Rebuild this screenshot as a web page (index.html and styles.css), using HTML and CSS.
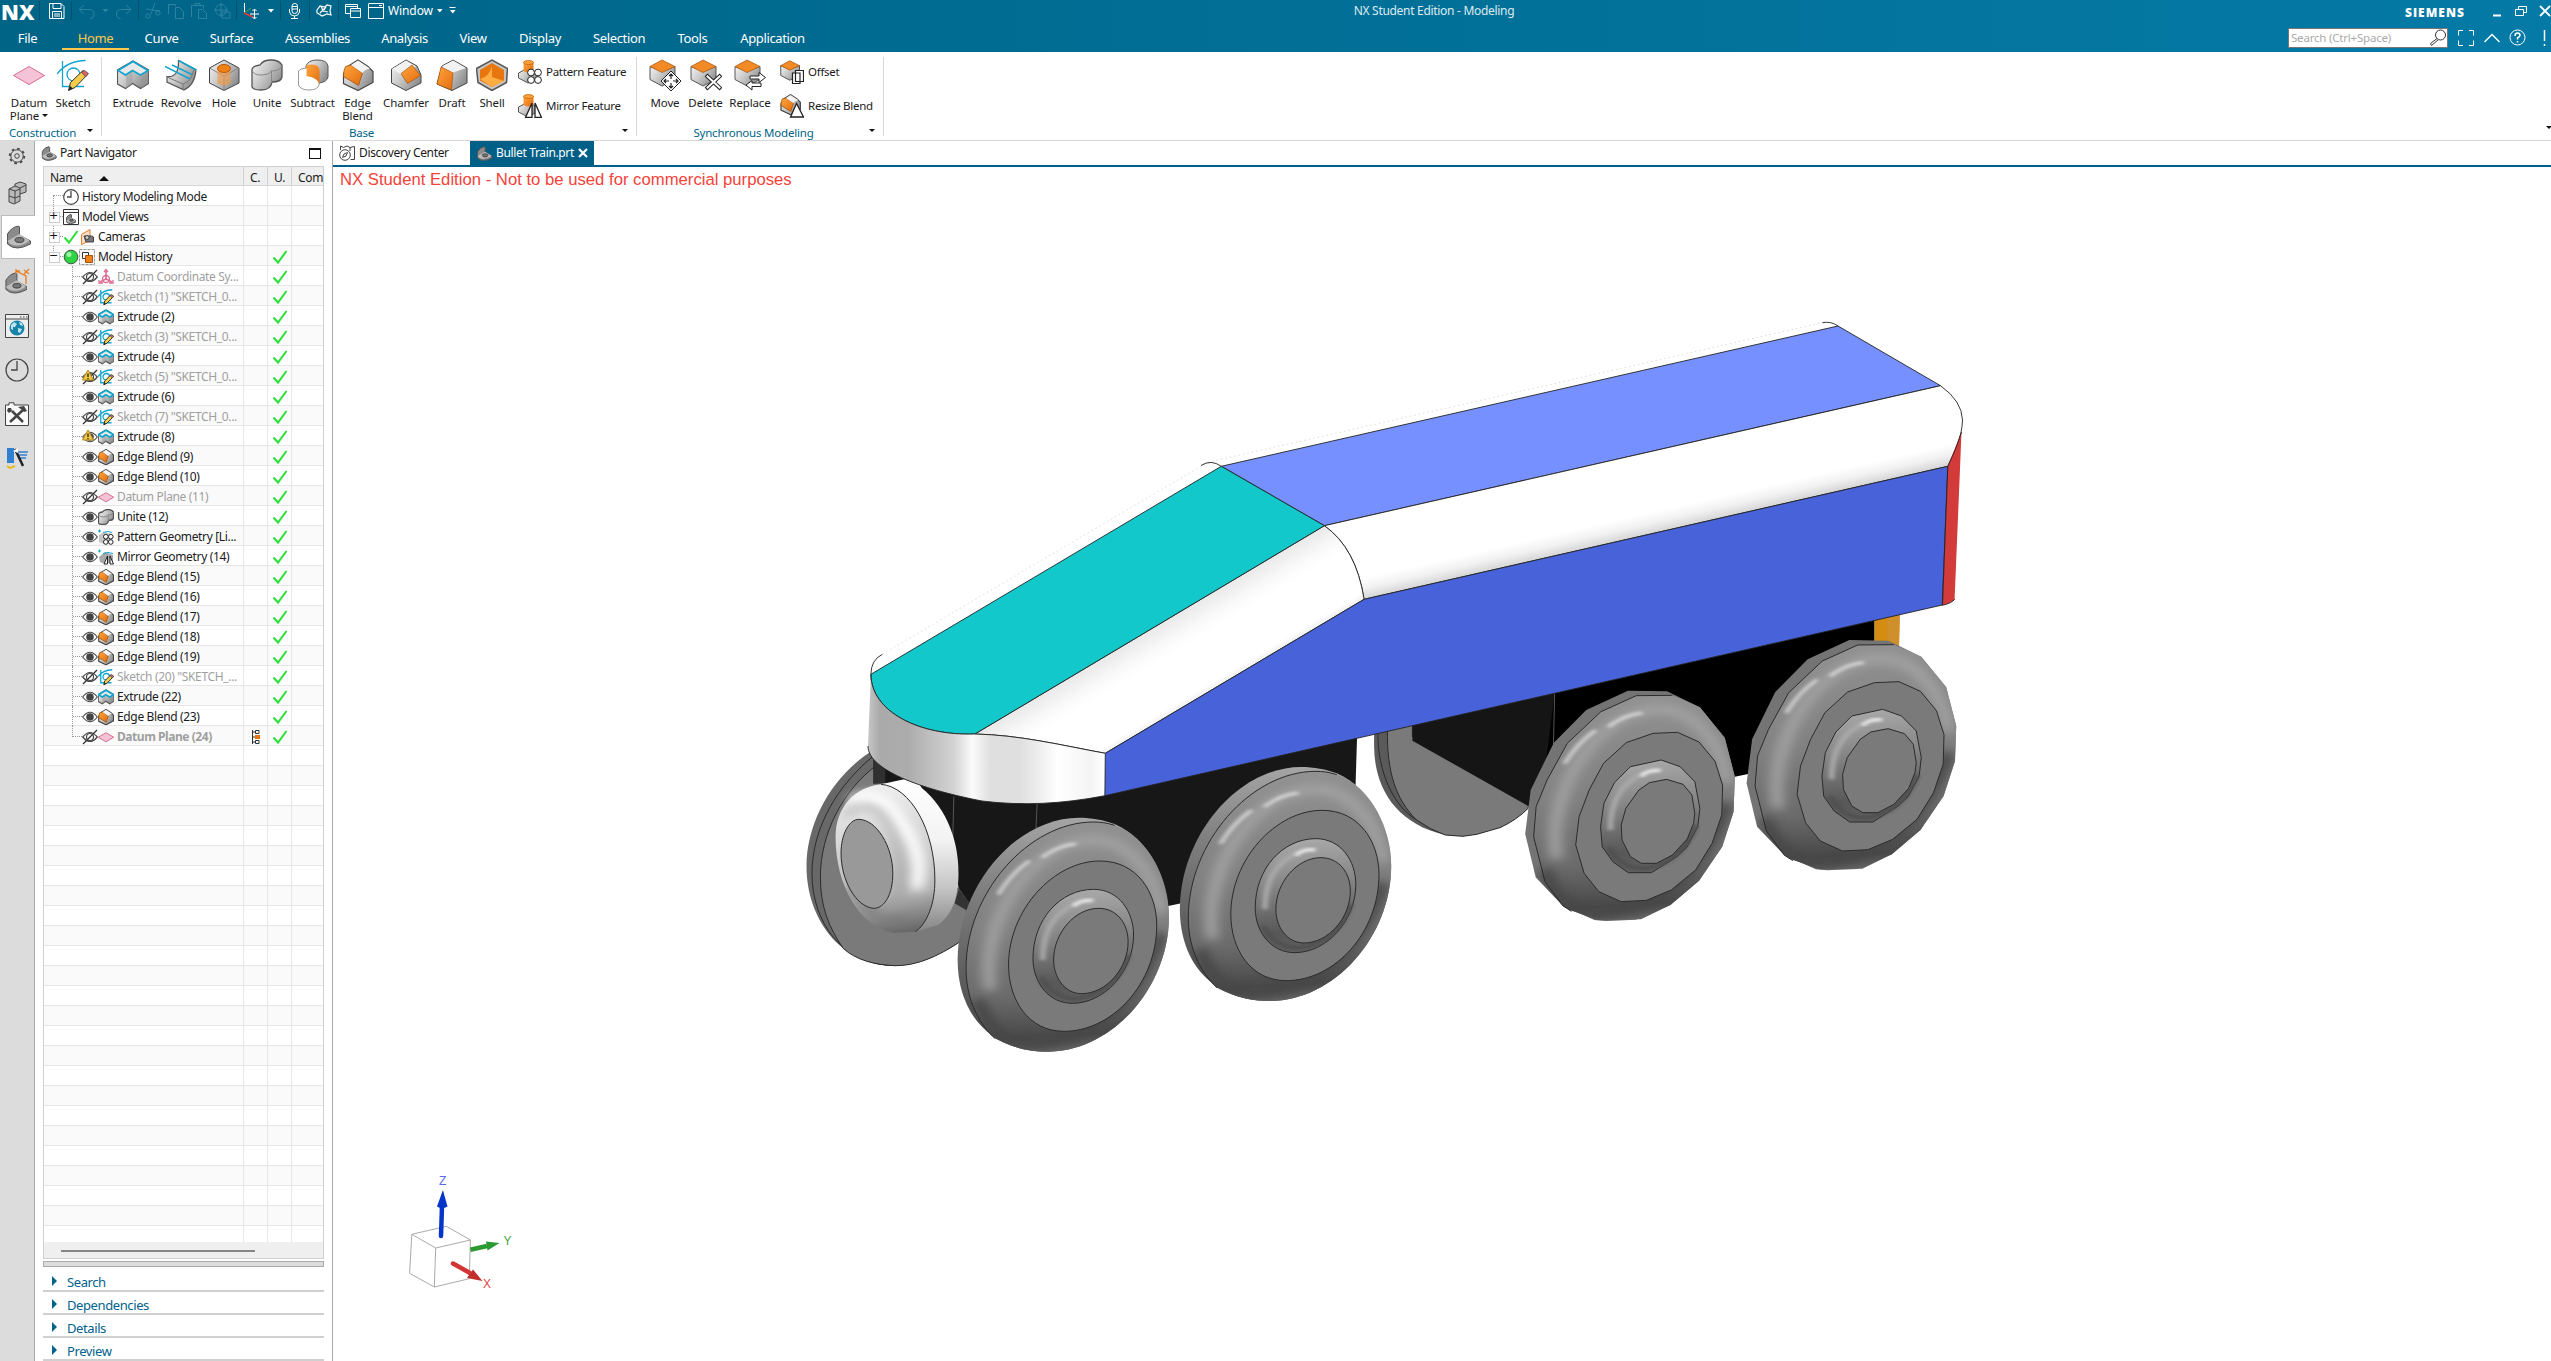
FILE: index.html
```html
<!DOCTYPE html>
<html lang="en">
<head>
<meta charset="utf-8">
<title>NX Student Edition - Modeling</title>
<link rel="stylesheet" href="styles.css">
</head>
<body>
<svg class="defs" width="0" height="0">
  <defs>
    <linearGradient id="steel" x1="0" x2="1" y1="0" y2=".6"><stop offset="0" stop-color="#f4f4f4"/><stop offset=".5" stop-color="#c9c9c9"/><stop offset="1" stop-color="#8f8f8f"/></linearGradient>
    <linearGradient id="amber" x1="0" x2="1" y1="0" y2="1"><stop offset="0" stop-color="#ffa640"/><stop offset="1" stop-color="#e36b0c"/></linearGradient>
    <symbol id="plane" viewBox="0 0 32 32"><path d="M.5 16.500 16 7.500 31.500 16.500 16 25.500Z" fill="#f5c3d6" stroke="#db6c94"/></symbol>
    <symbol id="sketch" viewBox="0 0 32 32"><path d="M5.500 2v25.500H27M0 15Q10 2 28.500 1.500" fill="none" stroke="#10a5cf" stroke-width="1.300"/><circle cx="16.500" cy="15.500" r="6.500" fill="none" stroke="#10a5cf" stroke-width="1.300"/><path d="M11.500 31.500l2-8L26 11.500l5 3.500L18 28.500Z" fill="#f3cc4c" stroke="#333"/><path d="M24.500 13l3-1.500 4 3-3 3.500Z" fill="#e2606a" stroke="#444" stroke-width=".7"/><path d="M11.500 31.500l1.500-4.500 3 2.500Z" fill="#222"/></symbol>
    <symbol id="extrude" viewBox="0 0 32 32"><path d="M.5 11v14l8 4.500 7-5 8 5 8-5V11L16 2Z" fill="url(#steel)" stroke="#555" stroke-width="1.200"/><path d="M.5 11 9 15.500v14l6.500-5V12l8.500 4v13.500l7.500-5V11Z" fill="#999" fill-opacity=".5"/><path d="M1 11.500 16 2.500l15 9-7.500 4.500-8-4.500L8.500 16Z" fill="#e9e9e9" stroke="#10a5cf" stroke-width="1.600"/></symbol>
    <symbol id="revolve" viewBox="0 0 32 32"><path d="M2 17.500Q14 19 13.500 1.500l17.500 9Q30 26 19 31L2 23Z" fill="url(#steel)" stroke="#555" stroke-width="1.200"/><path d="M2 18l16 7v6M18 25Q27 22 28.500 11" fill="none" stroke="#777"/><path d="M0 7.500 25 20M7 6l20 9.500M13.500 1.500 31 11" stroke="#10a5cf" stroke-width="1.500"/></symbol>
    <symbol id="hole" viewBox="0 0 32 32"><path d="M1.500 9 16 1l15 8v15L16 31.500 1.500 24Z" fill="url(#steel)" stroke="#444"/><path d="M1.500 9 16 17l15-8M16 17v14.500" stroke="#888" fill="none"/><path d="M9.500 10v14.500q6.500 4 13 0V10Z" fill="#f29a45" fill-opacity=".65"/><ellipse cx="16" cy="9.500" rx="6.500" ry="4" fill="#f28115" stroke="#b65a08"/></symbol>
    <symbol id="unite" viewBox="0 0 32 32"><path d="M1 11q0-4 8-5 3-5 11-5t11 5v12q-1 5-10 5-1 8-11 8T1 26Z" fill="url(#steel)" stroke="#555" stroke-width="1.300"/><path d="M1 11.500q2 5 10 4.500 9-1 9-4 9 0 11-5.500M20.500 12v12" fill="none" stroke="#888"/></symbol>
    <symbol id="subtract" viewBox="0 0 32 32"><path d="M9 7q2-6 11.500-6T31 7v11q-1 5-9 6l-13-8Z" fill="url(#steel)" stroke="#555"/><path d="M1.500 12v14q2 5 10.500 5t10-5V12Q17 7.500 9.500 9 3 9.500 1.500 12Z" fill="#fff" stroke="#999"/><path d="M9.500 6q12-2 13 5v15q-1-7-13-9Z" fill="url(#amber)"/></symbol>
    <symbol id="blend" viewBox="0 0 32 32"><path d="M1.500 20 1.500 15 5 8 16 1l10 6.500 5 5v11L16 31.500 1.500 24.500Z" fill="url(#steel)" stroke="#444" stroke-width="1.200"/><path d="M3.500 7.500 9 6l11.500 8-4 12.500L1.500 17.500Q1.500 11 3.500 7.500Z" fill="url(#amber)" stroke="#9c4c05" stroke-width=".7"/><path d="M9 6l7-4.500 12 8q-6 1-7.500 4.500Z" fill="#f3f3f3"/></symbol>
    <symbol id="chamfer" viewBox="0 0 32 32"><path d="M1.500 10 16 1l11 6 4 9v8L16 31.500 1.500 24Z" fill="url(#steel)" stroke="#444"/><path d="M2 10 16 1.500l10 6L12 16Z" fill="#f1f1f1"/><path d="M22 6l8.500 10.500-13 8L11 14.500Z" fill="url(#amber)" stroke="#9c4c05" stroke-width=".6"/></symbol>
    <symbol id="draft" viewBox="0 0 32 32"><path d="M6 7 17 1l14 8v15L16 31.500 1 25Z" fill="url(#steel)" stroke="#444"/><path d="M5 8l12 5.500L15.500 31 1 25Z" fill="url(#amber)" stroke="#9c4c05" stroke-width=".6"/><path d="M6 7.500 17 1.500 30 9l-13 4.500Z" fill="#f2f2f2"/></symbol>
    <symbol id="shell" viewBox="0 0 32 32"><path d="M.5 9.500 16 1l15.500 8.500-1 14L16 31.500 2 23.500Z" fill="#c5c5c5" stroke="#555" stroke-width="1.500"/><path d="M4 11 16 4l12 7v10.500L16 28 4 21.500Z" fill="#e8760e"/><path d="M4 20q9-2 12-13v11l12 4-12 6Z" fill="#ffad42"/></symbol>
    <symbol id="cube" viewBox="0 0 32 32"><path d="M1 7.500v13L13 27l13-6.500V7.500L13 12Z" fill="url(#steel)" stroke="#555"/><path d="M1 7.500 13 1l13 6.500L13 13.500Z" fill="#f28a25" stroke="#a45208" stroke-width=".7"/></symbol>
    <symbol id="pattern" viewBox="0 0 24 24"><path d="M.5 13 10 8l9 5v5l-9 5-9.500-5Z" fill="url(#steel)" stroke="#555"/><path d="M5.500 2v9q5 3 10 0V2Z" fill="url(#amber)"/><ellipse cx="10.500" cy="2.500" rx="5" ry="2" fill="#ffa23b" stroke="#b65a08" stroke-width=".7"/><g fill="#fff" stroke="#222"><circle cx="13" cy="12.500" r="3.400"/><circle cx="20" cy="12.500" r="3.400"/><circle cx="13" cy="20" r="3.400"/><circle cx="20" cy="20" r="3.400"/></g></symbol>
    <symbol id="mirror" viewBox="0 0 24 24"><path d="M.5 13 10 8l9 5v5l-9 5-9.500-5Z" fill="url(#steel)" stroke="#555"/><path d="M5.500 2v9q5 3 10 0V2Z" fill="url(#amber)"/><ellipse cx="10.500" cy="2.500" rx="5" ry="2" fill="#ffa23b" stroke="#b65a08" stroke-width=".7"/><path d="M14 9v14.500H7.500ZM17 9v14.500h6.500Z" fill="#fff" stroke="#222" stroke-width="1.300"/></symbol>
    <symbol id="pgeo" viewBox="0 0 16 16"><path d="M1 6l5-3 8 2v7l-8 3-5-2Z" fill="#c4c4c4"/><path d="M0 2h3M1.500.5v3M5 3.500q5-2 9 0" stroke="#10a5cf" fill="none"/><g fill="#fff" stroke="#222" stroke-width="1"><circle cx="7.800" cy="7.700" r="2.300"/><circle cx="12.800" cy="7.700" r="2.300"/><circle cx="7.800" cy="13" r="2.300"/><circle cx="12.800" cy="13" r="2.300"/></g></symbol>
    <symbol id="mgeo" viewBox="0 0 16 16"><path d="M1 8l6-5 8 3v7l-8 2-5-2Z" fill="#a9a9a9"/><path d="M0 2h3M1.500.5v3M5 4.500q5-2 10 0" stroke="#10a5cf" fill="none"/><path d="M9.500 7v8H6ZM12 7v8h3.500Z" fill="#fff" stroke="#222" stroke-width="1"/></symbol>
    <symbol id="csys" viewBox="0 0 16 16"><g fill="none" stroke="#db6c94" stroke-width="1.300"><path d="M8 1v9L2 13M8 10l6 3" stroke-width="1.600"/><circle cx="8" cy="10" r="3.500"/><path d="M6 3l2-2.500L10 3M1 11v3h4M15 11v3h-4"/></g></symbol>
    <symbol id="eye" viewBox="0 0 16 16"><path d="M.7 8Q8-1.500 15.300 8 8 17.500.7 8Z" fill="#fff" stroke="#4a4a4a" stroke-width="1.200"/><circle cx="8" cy="8" r="3.800" fill="#444"/></symbol>
    <symbol id="eyeoff" viewBox="0 0 16 16"><path d="M.7 8Q8-1 15.300 8 8 17 .7 8Z" fill="none" stroke="#4a4a4a" stroke-width="1.200"/><circle cx="8" cy="8" r="3.500" fill="none" stroke="#4a4a4a" stroke-width="1.200"/><path d="M1 15 15 1" stroke="#333" stroke-width="1.300"/></symbol>
    <symbol id="warn" viewBox="0 0 16 16"><path d="M6 1 11.500 11H.5Z" fill="#f3c944" stroke="#b38a1b"/><path d="M6 4.500v3.500M6 9v1.200" stroke="#222" stroke-width="1.300"/></symbol>
    <symbol id="check" viewBox="0 0 16 16"><path d="M1.500 8.500 6 13.500 14.500 2" fill="none" stroke="#2fe03c" stroke-width="2.100"/></symbol>
    <symbol id="clock" viewBox="0 0 24 24"><circle cx="12" cy="12" r="11" fill="none" stroke="#444" stroke-width="1.200"/><path d="M12 3v9H6" fill="none" stroke="#444" stroke-width="1.300"/></symbol>
    <symbol id="part" viewBox="0 0 24 24"><path d="M1 16V9Q5 2 12 1l1 1v8l11 6v3q-8 4-13 4-6 0-10-4Z" fill="#8b8b8b" stroke="#555"/><path d="M1 16l12-7 10 6.500q-6 5-12 5-7 0-10-4.500Z" fill="#bdbdbd"/><ellipse cx="13" cy="15" rx="4.500" ry="2.500" fill="#777" stroke="#444"/></symbol>
  </defs>
</svg>

<header class="top">
  <div class="titlebar">
    <div class="quick">
      <b class="nx">NX</b>
      <svg width="440" height="24" viewBox="38 0 440 24" fill="none" stroke="#fff">
        <path d="M39.500 1v19M71.500 1v19M138.500 1v19M236.500 1v19M280.500 1v19M309.500 1v19M338.500 1v19" stroke="#08506c"/>
        <path d="M49.500 3.500h11.500l3 3v12H49.500ZM53 3.500v5h8v-5M52.500 18v-6.500h9V18M54 14h6M54 16h6"/>
        <g stroke="#2f82a2"><path d="M84 5l-5 4.500 5 4.500M79.500 9.500H89q5 0 5 4.500t-4 4.500M126 5l5 4.500-5 4.500M131 9.500h-9.500q-5 0-5 4.500t4 4.500M155 3l-4 11M146 9l14 2"/><circle cx="148" cy="16" r="2.200"/><circle cx="158" cy="13" r="2.200"/><path d="M168.500 14V4.500h7V6M175.500 7.500h4l4 4v7h-8ZM191.500 17V5.500h12v3M195 5.500v-2h5v2M198.500 9.500h4l4 4v5h-8Z"/><circle cx="221" cy="10" r="5.500"/><path d="M214 10h14M221 3v14M222 12h8v6h-8Z"/></g>
        <path d="M102.500 9h6l-3 3.500Z" fill="#2f82a2" stroke="none"/>
        <path d="M244.500 3v11" stroke="#fff"/><path d="M244 13l7-5" stroke="#3fae49"/><path d="M244 13l9 4" stroke="#e43b3b" stroke-width="1.500"/><path d="M254.500 9.500v9M250 14h9M252.500 11l2-2 2 2M252.500 17l2 2 2-2"/>
        <path d="M268 9h6l-3 3.500Z" fill="#fff" stroke="none"/>
        <rect x="292" y="3.500" width="5.500" height="10" rx="2.700"/><path d="M292 6.500h5M292 9h5M289.500 9v3q1 4 5 4t5-4V9M294.500 16v2.500M291 18.500h7"/>
        <path d="M317 10l3-4 5 1 2-2 4 1-1 5 1 4-4-1-5 2-3-2-2-1ZM321 6l2 5 5 1M326 7l-2 3M320 13l6-6" stroke-width="1.200"/>
        <path d="M345.500 4.500h12v9h-12ZM345.500 6.500h12"/><path d="M350.500 8.500h10v9h-10Z" fill="#00678c"/><path d="M351 11h9M369 3.500h14.500v15H368.500V3.500M368.500 7.500h15M379 5.500h3"/>
        <text x="388" y="15" class="svg-label">Window</text>
        <path d="M437 9h5.500l-2.700 3.500ZM450 10h5.500l-2.700 3.500Z" fill="#fff" stroke="none"/><path d="M449.500 7.500h6"/>
      </svg>
    </div>
    <div class="app-title">NX Student Edition - Modeling</div>
    <div class="window-tools">
      <b class="brand">SIEMENS</b>
      <svg width="62" height="24" viewBox="2489 0 62 24" fill="none" stroke="#fff"><path d="M2493 15.500h8" stroke-width="2"/><path d="M2515.500 9.500h8v6h-8ZM2518.500 9V6.500h8v6h-3"/><path d="M2540 6l10 10M2550 6l-10 10" stroke-width="1.800"/></svg>
    </div>
  </div>
  <div class="menubar">
    <nav>
      <a>File</a><a class="on">Home</a><a>Curve</a><a>Surface</a><a>Assemblies</a><a>Analysis</a><a>View</a><a>Display</a><a>Selection</a><a>Tools</a><a>Application</a>
    </nav>
    <div class="find">
      <div class="search"><span>Search (Ctrl+Space)</span><svg width="18" height="18" viewBox="0 0 18 18" fill="none" stroke="#333"><circle cx="11.500" cy="6" r="5"/><path d="M8 9.500l-6.500 5 1 2 6.500-5.500"/></svg></div>
      <svg width="103" height="28" viewBox="2448 24 103 28" fill="none" stroke="#fff"><path d="M2463 30.500h-4.500v5M2469 30.500h4.500v5M2463 45.500h-4.500v-5M2469 45.500h4.500v-5"/><path d="M2484.500 42l7.500-7.500 7.500 7.500" stroke-width="1.400"/><circle cx="2517.500" cy="37.500" r="7.500"/><path d="M2515 36q0-3 2.500-3t2.500 2.300q0 1.500-2.500 2.700v1.500M2517.500 41v1.500M2544.500 30v11M2544.500 44v2" stroke-width="1.500"/></svg>
    </div>
  </div>
</header>

<section class="ribbon">
  <div class="group g1">
    <div class="tools">
      <div class="tool"><svg><use href="#plane"/></svg><span>Datum<br>Plane<i class="caret"></i></span></div>
      <div class="tool"><svg><use href="#sketch"/></svg><span>Sketch</span></div>
    </div>
    <footer><span>Construction</span><i class="caret"></i></footer>
  </div>
  <div class="group g2">
    <div class="tools">
      <div class="tool"><svg><use href="#extrude"/></svg><span>Extrude</span></div>
      <div class="tool"><svg><use href="#revolve"/></svg><span>Revolve</span></div>
      <div class="tool"><svg><use href="#hole"/></svg><span>Hole</span></div>
      <div class="tool"><svg><use href="#unite"/></svg><span>Unite</span></div>
      <div class="tool"><svg><use href="#subtract"/></svg><span>Subtract</span></div>
      <div class="tool"><svg><use href="#blend"/></svg><span>Edge<br>Blend</span></div>
      <div class="tool"><svg><use href="#chamfer"/></svg><span>Chamfer</span></div>
      <div class="tool"><svg><use href="#draft"/></svg><span>Draft</span></div>
      <div class="tool"><svg><use href="#shell"/></svg><span>Shell</span></div>
      <div class="stack">
        <div><svg><use href="#pattern"/></svg><span>Pattern Feature</span></div>
        <div><svg><use href="#mirror"/></svg><span>Mirror Feature</span></div>
      </div>
    </div>
    <footer><span>Base</span><i class="caret"></i></footer>
  </div>
  <div class="group g3">
    <div class="tools">
      <div class="tool"><svg viewBox="0 0 32 32"><use href="#cube" width="32" height="32"/><path d="M22 12l10 10-10 10-10-10Z" fill="#fff" stroke="#222"/><path d="M22 15v5M22 24v5M15 22h5M24 22h5M20 17l2-2 2 2M20 27l2 2 2-2M17 20l-2 2 2 2M27 20l2 2-2 2" stroke="#222" fill="none" stroke-width="1.200"/></svg><span>Move</span></div>
      <div class="tool"><svg viewBox="0 0 32 32"><use href="#cube" width="32" height="32"/><path d="M16 16l15 14M31 16 16 30" stroke="#222" stroke-width="4"/><path d="M16.800 16.700l13.500 12.600M30.300 16.700 16.800 29.300" stroke="#fff" stroke-width="2"/></svg><span>Delete</span></div>
      <div class="tool"><svg viewBox="0 0 32 32"><use href="#cube" width="32" height="32"/><path d="M16 17h9v-3.500l6.500 5-6.500 5V20h-9ZM27 24h-9v-2.500l-6 4.500 6 5v-3.500h9Z" fill="#fff" stroke="#222"/></svg><span>Replace</span></div>
      <div class="stack">
        <div><svg viewBox="0 0 24 24"><use href="#cube" width="24" height="24"/><path d="M15.500 10.500h8v11h-8ZM12.500 13h7.500v10.500h-7.500Z" fill="#fff" stroke="#222" stroke-width="1.200"/></svg><span>Offset</span></div>
        <div><svg viewBox="0 0 24 24"><use href="#blend" width="21" height="21"/><path d="M16.500 9.500 23.500 23h-13Z" fill="#fff" stroke="#222" stroke-width="1.300"/></svg><span>Resize Blend</span></div>
      </div>
    </div>
    <footer><span>Synchronous Modeling</span><i class="caret"></i></footer>
  </div>
  <div class="ribbon-end"><i class="caret"></i></div>
</section>

<main class="work">
  <aside class="rail">
    <div class="slot gear"><svg width="18" height="18" viewBox="0 0 18 18" fill="none" stroke="#444"><circle cx="9" cy="9" r="2.300"/><circle cx="9" cy="9" r="6.200"/><circle cx="9" cy="9" r="7.300" stroke-width="1.800" stroke-dasharray="2.600 3.130"/></svg></div>
    <div class="slot"><svg width="20" height="24" viewBox="0 0 20 24" fill="#b9b9b9" stroke="#444"><path d="M2 8l6-3v-2l5-2 6 2v8l-6 2v7l-6 3-5-2Z"/><path d="M2 8l6 2 5-2M8 10v12M2 15l6 2 5-2M8 5l5 2 6-3M13 7v6" fill="none"/></svg></div>
    <div class="slot on"><svg width="25" height="24"><use href="#part"/></svg></div>
    <div class="slot"><svg width="25" height="26" viewBox="0 0 25 26"><use href="#part" y="4" width="22" height="22"/><path d="M11 3l10 5v8M11 1v5M11 3h4M19 2l5 4M24 1l-5 5" fill="none" stroke="#e87d22" stroke-width="1.300"/></svg></div>
    <div class="slot"><svg width="24" height="24" viewBox="0 0 24 24"><path d="M.5.5h23v23H.5Z" fill="#eee" stroke="#444"/><path d="M1 5h22M15 3h1.500M18 3h1.500M21 3h1.500" stroke="#444"/><circle cx="12" cy="14" r="7.500" fill="#1683a8"/><path d="M6 11l3-3 3 2-2 3-2 0 0 3-2-1ZM14 8l3 1 1 3-3-1ZM13 14l4 1-2 4-2-1Z" fill="#bfe3ee"/></svg></div>
    <div class="slot"><svg width="24" height="24"><use href="#clock"/></svg></div>
    <div class="slot"><svg width="24" height="24" viewBox="0 0 24 24"><path d="M.5 23.500V3H4V.8h5V3h14.500v20.500Z" fill="#fafafa" stroke="#444"/><path d="M5 20 18 8M7 9l11 11" stroke="#444" stroke-width="2.500"/><path d="M3 6l3 0 1 3-3 2-2-2ZM13 5l6-1 3 5-3 1-2-2Z" fill="#444"/></svg></div>
    <div class="slot"><svg width="24" height="22" viewBox="0 0 24 22"><path d="M2 1h7v15H2Z" fill="#2f80d0"/><path d="M2 19l3 2 5-2" stroke="#e5b91f" stroke-width="2" fill="none"/><path d="M10 5h13M12 8h10M14 11h7" stroke="#2f80d0" stroke-width="1.300"/><path d="M10 2l8 17" stroke="#222" stroke-width="2.500"/><path d="M8 4l5-3v5" fill="#fff"/></svg></div>
  </aside>

  <section class="navigator">
    <div class="nav-title"><svg width="16" height="15" viewBox="0 0 24 24"><use href="#part" width="24" height="24"/></svg><span>Part Navigator</span><i class="maximize"></i></div>
    <div class="tree">
      <div class="row head"><div>Name<i class="sort"></i></div><div>C.</div><div>U.</div><div>Com</div></div>
      <div class="body">
      <div class="row"><div class="lvl first"><svg><use href="#clock"/></svg>History Modeling Mode</div></div>
      <div class="row"><div class="lvl plus"><svg viewBox="0 0 16 16"><path d="M.5.500h15v15H.5Z" fill="#fff" stroke="#333"/><path d="M0 3.500h16" stroke="#333"/><use href="#part" x="3" y="5" width="10" height="10"/></svg>Model Views</div></div>
      <div class="row"><div class="lvl plus"><svg><use href="#check"/></svg><svg viewBox="0 0 16 16"><path d="M2.500 5.500 11 .5v11L2.500 15.500Z" fill="#f6dfca" stroke="#e87d22"/><path d="M5 7h8l1.500 1v5H7Z" fill="#777" stroke="#444"/><circle cx="8" cy="8.500" r="2" fill="#ccc" stroke="#444"/></svg>Cameras</div></div>
      <div class="row"><div class="lvl minus"><svg viewBox="0 0 16 16"><circle cx="8" cy="8" r="6.800" fill="#2fd344" stroke="#3d5a40"/><circle cx="6" cy="5.500" r="2.500" fill="#9df5a6"/></svg><svg viewBox="0 0 16 16"><path d="M.5.500h15v15H.5Z" fill="none" stroke="#999" stroke-dasharray="3 1"/><path d="M3.500 3.500h6v6h-6Z" fill="#fff" stroke="#333"/><path d="M6.500 6.500h7v7h-7Z" fill="#f0801a" stroke="#a2530c"/></svg>Model History</div><svg class="ok"><use href="#check"/></svg></div>
      <div class="row dim"><div class="leaf"><svg><use href="#eyeoff"/></svg><svg><use href="#csys"/></svg>Datum Coordinate Sy...</div><svg class="ok"><use href="#check"/></svg></div>
      <div class="row dim"><div class="leaf"><svg><use href="#eyeoff"/></svg><svg><use href="#sketch"/></svg>Sketch (1) "SKETCH_0...</div><svg class="ok"><use href="#check"/></svg></div>
      <div class="row"><div class="leaf"><svg><use href="#eye"/></svg><svg><use href="#extrude"/></svg>Extrude (2)</div><svg class="ok"><use href="#check"/></svg></div>
      <div class="row dim"><div class="leaf"><svg><use href="#eyeoff"/></svg><svg><use href="#sketch"/></svg>Sketch (3) "SKETCH_0...</div><svg class="ok"><use href="#check"/></svg></div>
      <div class="row"><div class="leaf"><svg><use href="#eye"/></svg><svg><use href="#extrude"/></svg>Extrude (4)</div><svg class="ok"><use href="#check"/></svg></div>
      <div class="row dim"><div class="leaf"><svg><use href="#eyeoff"/><use href="#warn"/></svg><svg><use href="#sketch"/></svg>Sketch (5) "SKETCH_0...</div><svg class="ok"><use href="#check"/></svg></div>
      <div class="row"><div class="leaf"><svg><use href="#eye"/></svg><svg><use href="#extrude"/></svg>Extrude (6)</div><svg class="ok"><use href="#check"/></svg></div>
      <div class="row dim"><div class="leaf"><svg><use href="#eyeoff"/></svg><svg><use href="#sketch"/></svg>Sketch (7) "SKETCH_0...</div><svg class="ok"><use href="#check"/></svg></div>
      <div class="row"><div class="leaf"><svg><use href="#eye"/><use href="#warn"/></svg><svg><use href="#extrude"/></svg>Extrude (8)</div><svg class="ok"><use href="#check"/></svg></div>
      <div class="row"><div class="leaf"><svg><use href="#eye"/></svg><svg><use href="#blend"/></svg>Edge Blend (9)</div><svg class="ok"><use href="#check"/></svg></div>
      <div class="row"><div class="leaf"><svg><use href="#eye"/></svg><svg><use href="#blend"/></svg>Edge Blend (10)</div><svg class="ok"><use href="#check"/></svg></div>
      <div class="row dim"><div class="leaf"><svg><use href="#eyeoff"/></svg><svg><use href="#plane"/></svg>Datum Plane (11)</div><svg class="ok"><use href="#check"/></svg></div>
      <div class="row"><div class="leaf"><svg><use href="#eye"/></svg><svg><use href="#unite"/></svg>Unite (12)</div><svg class="ok"><use href="#check"/></svg></div>
      <div class="row"><div class="leaf"><svg><use href="#eye"/></svg><svg><use href="#pgeo"/></svg>Pattern Geometry [Li...</div><svg class="ok"><use href="#check"/></svg></div>
      <div class="row"><div class="leaf"><svg><use href="#eye"/></svg><svg><use href="#mgeo"/></svg>Mirror Geometry (14)</div><svg class="ok"><use href="#check"/></svg></div>
      <div class="row"><div class="leaf"><svg><use href="#eye"/></svg><svg><use href="#blend"/></svg>Edge Blend (15)</div><svg class="ok"><use href="#check"/></svg></div>
      <div class="row"><div class="leaf"><svg><use href="#eye"/></svg><svg><use href="#blend"/></svg>Edge Blend (16)</div><svg class="ok"><use href="#check"/></svg></div>
      <div class="row"><div class="leaf"><svg><use href="#eye"/></svg><svg><use href="#blend"/></svg>Edge Blend (17)</div><svg class="ok"><use href="#check"/></svg></div>
      <div class="row"><div class="leaf"><svg><use href="#eye"/></svg><svg><use href="#blend"/></svg>Edge Blend (18)</div><svg class="ok"><use href="#check"/></svg></div>
      <div class="row"><div class="leaf"><svg><use href="#eye"/></svg><svg><use href="#blend"/></svg>Edge Blend (19)</div><svg class="ok"><use href="#check"/></svg></div>
      <div class="row dim"><div class="leaf"><svg><use href="#eyeoff"/></svg><svg><use href="#sketch"/></svg>Sketch (20) "SKETCH_...</div><svg class="ok"><use href="#check"/></svg></div>
      <div class="row"><div class="leaf"><svg><use href="#eye"/></svg><svg><use href="#extrude"/></svg>Extrude (22)</div><svg class="ok"><use href="#check"/></svg></div>
      <div class="row"><div class="leaf"><svg><use href="#eye"/></svg><svg><use href="#blend"/></svg>Edge Blend (23)</div><svg class="ok"><use href="#check"/></svg></div>
      <div class="row dim bold"><div class="leaf last"><svg><use href="#eyeoff"/></svg><svg><use href="#plane"/></svg>Datum Plane (24)</div><svg class="mark" viewBox="0 0 16 16"><path d="M4.500 1v14M4.500 3h3M4.500 8h3M4.500 13h3" stroke="#333"/><path d="M7.500 1.500h3.500v3H7.500ZM7.500 11.500h3.500v3H7.500Z" fill="#fff" stroke="#333"/><path d="M7 6h5v4H7Z" fill="#e8760e"/></svg><svg class="ok"><use href="#check"/></svg></div>
      </div>
      <div class="hscroll"><i></i></div>
    </div>
    <div class="splitter"></div>
    <div class="panel">Search</div>
    <div class="panel">Dependencies</div>
    <div class="panel">Details</div>
    <div class="panel">Preview</div>
  </section>

  <section class="document">
    <div class="tabs">
      <div class="tab"><svg width="17" height="17" viewBox="0 0 17 17" fill="none" stroke="#444"><path d="M1.500 5V1l3 1.500L8 1l3 1.500V6M11 2.500l4.500-1v13h-4"/><circle cx="6" cy="10" r="5.300"/><path d="M8.500 7.500 7 11l-3.500 1.500L5 9Z"/></svg><span>Discovery Center</span></div>
      <div class="tab active"><svg width="15" height="15" viewBox="0 0 24 24"><use href="#part" width="24" height="24"/></svg><span>Bullet Train.prt</span><svg width="10" height="10" viewBox="0 0 10 10"><path d="M1 1l8 8M9 1 1 9" stroke="#fff" stroke-width="2.200"/></svg></div>
    </div>
    <div class="viewport">
      <p class="watermark">NX Student Edition - Not to be used for commercial purposes</p>
      <svg class="scene" width="2218" height="1194" viewBox="333 167 2218 1194">
        <defs>
          <linearGradient id="nose" gradientUnits="userSpaceOnUse" x1="868" x2="1105" y1="0" y2="0">
            <stop offset="0" stop-color="#c6c6c6"/><stop offset=".05" stop-color="#aaa"/><stop offset=".17" stop-color="#acacac"/><stop offset=".25" stop-color="#bdbdbd"/><stop offset=".36" stop-color="#d2d2d2"/><stop offset=".44" stop-color="#fbfbfb"/><stop offset=".52" stop-color="#dedede"/><stop offset=".64" stop-color="#dfdfdf"/><stop offset=".73" stop-color="#f0f0f0"/><stop offset=".8" stop-color="#fff"/><stop offset=".94" stop-color="#f4f4f4"/><stop offset="1" stop-color="#fff"/>
          </linearGradient>
          <linearGradient id="side" gradientUnits="userSpaceOnUse" x1="1656" y1="533" x2="1632.400" y2="429.500"><stop offset="0" stop-color="#d4d4d4"/><stop offset=".1" stop-color="#f1f1f1"/><stop offset=".2" stop-color="#fff"/><stop offset="1" stop-color="#fff"/></linearGradient>
          <linearGradient id="slope" gradientUnits="userSpaceOnUse" x1="1150" y1="629.600" x2="1203.500" y2="719"><stop offset="0" stop-color="#e9e9e9"/><stop offset=".2" stop-color="#fafafa"/><stop offset=".3" stop-color="#fff"/><stop offset=".74" stop-color="#fff"/><stop offset=".87" stop-color="#dcdcdc"/></linearGradient>
          <linearGradient id="tyre" gradientUnits="userSpaceOnUse" x1="640" y1="540" x2="700" y2="1235"><stop offset="0" stop-color="#929292"/><stop offset=".45" stop-color="#818181"/><stop offset=".75" stop-color="#6a6a6a"/><stop offset=".93" stop-color="#484848"/><stop offset="1" stop-color="#6a6a6a"/></linearGradient>
          <linearGradient id="rim" gradientUnits="userSpaceOnUse" x1="0" y1="533" x2="0" y2="1235"><stop offset="0" stop-color="#a5a5a5"/><stop offset=".3" stop-color="#808080"/><stop offset=".7" stop-color="#5c5c5c"/><stop offset="1" stop-color="#4a4a4a"/></linearGradient>
          <linearGradient id="hub" gradientUnits="userSpaceOnUse" x1="680" y1="750" x2="720" y2="1090"><stop offset="0" stop-color="#aaa"/><stop offset=".4" stop-color="#858585"/><stop offset=".8" stop-color="#585858"/><stop offset="1" stop-color="#606060"/></linearGradient>
          <linearGradient id="lamp" gradientUnits="userSpaceOnUse" x1="190" y1="430" x2="280" y2="878"><stop offset="0" stop-color="#f0f0f0"/><stop offset=".35" stop-color="#d8d8d8"/><stop offset=".75" stop-color="#b4b4b4"/><stop offset="1" stop-color="#686868"/></linearGradient>
          <linearGradient id="lampside" gradientUnits="userSpaceOnUse" x1="0" y1="418" x2="0" y2="870"><stop offset="0" stop-color="#fff"/><stop offset=".4" stop-color="#f3f3f3"/><stop offset=".72" stop-color="#c5c5c5"/><stop offset="1" stop-color="#888"/></linearGradient>
          <filter id="b4" x="-50%" y="-50%" width="200%" height="200%"><feGaussianBlur stdDeviation="5"/></filter>
          <filter id="b9" x="-50%" y="-50%" width="200%" height="200%"><feGaussianBlur stdDeviation="14"/></filter>
          <path id="tyreshape" d="M422 960C422 740 560 533 710 533 740 533 770 540 795 552 880 600 924 720 924 830 924 1040 790 1235 635 1235 500 1235 422 1120 422 960Z"/>
          <clipPath id="tyreclip"><use href="#tyreshape"/></clipPath>
          <path id="polytyre" d="M440 822 453 690 508 548 585 450 684 392 777 394 855 442 914 533 938 650 935 755 908 860 853 962 785 1035 703 1079 632 1083 605 1080 530 1038 465 952Z"/>
          <clipPath id="polyclip"><use href="#polytyre"/></clipPath>
          <g id="shading">
            <path d="M500 1050C470 850 600 590 750 600 830 605 890 700 905 820" fill="none" stroke="#a2a2a2" stroke-width="30" filter="url(#b9)"/>
            <path d="M470 1080C500 1200 570 1225 640 1205 750 1185 860 1040 905 880" fill="none" stroke="#474747" stroke-width="34" filter="url(#b9)"/>
            <path d="M520 760q30-60 70-95M625 650q40-35 75-38" fill="none" stroke="#d8d8d8" stroke-width="9" stroke-linecap="round" filter="url(#b4)"/>
          </g>
          <g id="hubshade">
            <path d="M624 960q0-130 80-170" fill="none" stroke="#aaa" stroke-width="13" filter="url(#b4)"/>
            <path d="M700 795q15-15 40-14" fill="none" stroke="#f0f0f0" stroke-width="10" stroke-linecap="round" filter="url(#b4)"/>
            <path d="M620 1010q30 70 90 65 80-15 118-130" fill="none" stroke="#505050" stroke-width="12" filter="url(#b4)"/>
          </g>
          <g id="wheel">
            <use href="#tyreshape" fill="url(#rim)"/>
            <path d="M795 556C775 548 760 546 745 546 590 546 442 760 442 985 442 1090 480 1160 510 1195 560 1228 600 1235 635 1235 790 1235 924 1040 924 830 920 700 870 590 795 556Z" fill="url(#tyre)"/>
            <g clip-path="url(#tyreclip)"><use href="#shading"/></g>
            <path class="line" d="M795 556C775 548 760 546 745 546 590 546 442 760 442 985 442 1090 480 1160 510 1195"/>
            <path class="line" fill="#7a7a7a" d="M543 975C543 810 650 663 760 663 850 663 895 760 895 855 895 1030 790 1174 675 1174 590 1174 543 1080 543 975Z"/>
            <path class="line" fill="url(#hub)" d="M601 955C601 840 665 748 745 748 805 748 840 815 840 885 840 995 770 1090 695 1090 640 1090 601 1030 601 955Z"/>
            <use href="#hubshade"/>
            <path class="line" fill="#7a7a7a" d="M650 960C650 880 700 805 757 805 800 805 827 850 827 905 827 985 775 1061 717 1061 675 1061 650 1010 650 960Z"/>
          </g>
          <g id="polywheel">
            <use href="#polytyre" fill="#747474"/>
            <path fill="url(#tyre)" transform="translate(15 -152)" d="M775 558 689 559 605 607 525 702 475 817 451 892 445 982 472 1117 515 1190 530 1202 600 1232 700 1230 770 1187 838 1114 893 1012 920 907 923 802 899 685 840 594Z"/>
            <g clip-path="url(#polyclip)"><use href="#shading" transform="translate(15 -152)"/></g>
            <path class="line" d="M790 406 704 407 620 455 540 550 492 660 466 740 460 830 487 965 530 1038 550 1054"/>
            <path class="line" fill="#7a7a7a" d="M560 855 568 770 592 690 626 610 680 548 744 520 802 517 853 546 891 604 909 676 907 765 884 850 845 930 787 990 728 1021 668 1025 615 995 580 940Z"/>
            <path class="line" fill="url(#hub)" transform="translate(18 -152)" d="M601 952 609 882 634 820 672 772 745 752 790 772 825 817 837 897 832 952 806 1014 782 1042 722 1090 667 1090 630 1057 605 1012Z"/>
            <use href="#hubshade" transform="translate(18 -150)"/>
            <path class="line" fill="#7a7a7a" d="M668 795 679 745 710 690 735 668 776 658 815 673 836 705 843 760 840 790 825 837 790 885 752 910 716 910 690 890 670 840Z"/>
          </g>
        </defs>

        <!-- rear bogie -->
        <g transform="translate(1340 560) scale(.42092 .33333)">
          <path fill="#5a5a5a" d="M81 515V560C82 680 130 790 250 825L292 829 325 823Q380 805 447 745V700L172 530V490Z"/>
          <path class="line" fill="#7a7a7a" d="M113 505C110 640 135 720 180 778L215 806 250 825 292 829 325 823 380 803Q420 780 447 745V700L172 530V490Z"/>
          <path class="line" d="M90 512C88 640 130 740 180 778"/>
          <path fill="#151515" d="M172 495 510 398V700L447 738 172 542Z"/>
          <path fill="#000" d="M510 398 1270 178V320L990 637 938 650 480 700Z"/>
          <path d="M510 403 507 560" class="line seam"/>
          <path fill="#d48c12" d="M1270 175 1330 155 1328 262 1270 250Z"/><path d="M1300 175 1330 160 1328 262 1300 250Z" fill="#cf8f2a"/>
        </g>
        <!-- front bogie -->
        <g transform="translate(780 640) scale(.42092 .33333)">
          <path fill="#686868" d="M222 330C130 400 63 540 63 680 63 830 140 977 275 977 340 977 400 930 445 890V790L222 345Z"/>
          <path class="line" d="M275 977C150 977 76 850 76 700 76 560 140 430 225 345"/>
          <path class="line" fill="#7a7a7a" d="M230 375C150 450 96 580 96 710 96 800 115 860 150 925 180 960 225 975 275 977 340 977 400 930 445 890V790Z"/>
          <path fill="#171717" d="M222 335 772 450 1371 290 1367 450 1300 640 948 791 800 830 450 815 424 745 410 600 330 430H222Z"/>
          <path d="M222 340V432L250 428V360Z" fill="#303030"/>
          <path d="M413 470 410 620M611 490 608 570M424 745 452 795" class="line seam"/>
          <path d="M424 750 452 790 445 812 415 790Z" fill="#333"/>
          <path fill="url(#lampside)" d="M240 433 295 418 322 430C390 490 424 590 424 700 424 780 405 830 375 855L322 875Z"/>
          <path fill="url(#lamp)" d="M240 433C180 440 132 500 132 590 132 740 190 860 270 878L322 875C350 850 368 790 368 720 368 570 310 440 240 433Z"/>
          <g fill="none"><path d="M180 480Q245 450 285 545 345 640 325 735" stroke="#fff" stroke-width="30" stroke-linecap="round" filter="url(#b9)"/><path d="M165 740Q205 845 300 840" stroke="#777" stroke-width="18" filter="url(#b9)"/><path d="M155 530Q190 470 240 520 300 620 285 760 270 820 225 820" stroke="#999" stroke-width="10" filter="url(#b9)"/></g>
          <path class="line" d="M240 433C310 440 368 570 368 720 368 790 350 850 322 875"/>
          <path class="line" fill="#999" d="M145 640C145 585 163 538 188 538 230 540 268 620 268 700 268 760 250 805 222 805 180 800 145 720 145 640Z"/>
          <use href="#wheel" x="528" y="-152"/>
          <use href="#wheel"/>
        </g>
        <g transform="translate(1340 560) scale(.42092 .33333)">
          <use href="#polywheel"/>
          <use href="#polywheel" x="526" y="-152"/>
        </g>
        <!-- car body -->
        <path fill="#fff" d="M871 674Q872 658 882.300 654.300L1207.700 462.300Q1215 461 1221.300 466.300Z"/>
        <path d="M882.300 654.300 1207.700 462.300 1822.300 322.700" fill="none" stroke="#ddd" stroke-dasharray="1.500 3"/>
        <path class="edge" d="M870.900 674.300Q871 660 882.300 654.300M1201 465.500Q1211 459 1221.300 466.300M1822.300 322.700Q1831 321 1838 326"/>
        <path class="edge" fill="#7690ff" d="M1221.300 466.300 1838 326 1940.500 385.700 1324.400 525.700Z"/>
        <path class="edge" fill="url(#side)" d="M1324.400 525.700 1940.500 385.700Q1962 401 1962.500 420C1962 437 1955 452 1947.800 466.300L1364.100 599.300Q1356 548 1324.400 525.700Z"/>
        <path class="edge" fill="url(#slope)" d="M974.900 734 1324.400 525.700Q1356 548 1364.100 599.300L1105.300 753.300C1060 745 1020 735 974.900 734Z"/>
        <path class="edge" fill="#12c8cb" d="M870.900 674.300 1221.300 466.300 1324.400 525.700 974.900 734C920 736 871 712 870.900 674.300Z"/>
        <path fill="url(#nose)" d="M870.900 674.300C871 712 920 736 974.900 734 1020 735 1060 745 1105.300 753.300L1104.900 795.700C1062 804 1022 806 982 801 930 791 868 772 868 746Z"/>
        <path class="edge" d="M868 746C868 772 930 791 982 801 1022 806 1062 804 1104.900 795.700M870.900 674.300C871 712 920 736 974.900 734 1020 735 1060 745 1105.300 753.300"/>
        <path class="edge" fill="#4862d9" d="M1105.300 753.300 1364.100 599.300 1947.800 466.300 1942.300 605 1104.900 795.700Z"/>
        <path fill="#d33a3a" d="M1961.500 432 1947.800 466.300 1942.500 605.300Q1952 603 1954.600 599.300Z"/>
        <path class="edge" d="M1961.500 432Q1956 450 1947.800 466.300L1942.500 605.300Q1952 603 1954.600 599.300"/>
        <!-- view triad -->
        <g fill="none" stroke="#aaa"><path d="M411.800 1234.300 446.400 1226.300 470.400 1240 435.700 1248ZM411.800 1234.300 409.600 1273.300 434.300 1287 435.700 1248M434.300 1287 469.300 1278.700 470.400 1240"/></g>
        <path d="M441 1236 442 1206" stroke="#0735c8" stroke-width="4.500" stroke-linecap="round"/><path d="M442.900 1190 447.500 1206.500Q442 1210 437 1206.500Z" fill="#0735c8"/>
        <path d="M470.400 1249.700 487 1246" stroke="#2c9a32" stroke-width="4.500"/><path d="M499.500 1243 486 1241.500 487.500 1250.500Z" fill="#2c9a32"/>
        <path d="M453 1263.500 470 1273" stroke="#d53434" stroke-width="4.500" stroke-linecap="round"/><path d="M482.500 1281 473 1269.500 467 1278Z" fill="#c22d2d"/>
        <g class="axis"><text x="439" y="1185" fill="#5a68e8">Z</text><text x="503.500" y="1245" fill="#3fa147">Y</text><text x="483" y="1288" fill="#dd4848">X</text></g>
      </svg>
    </div>
  </section>
</main>
</body>
</html>
```
FILE: styles.css
```css
* { box-sizing: border-box; }
body { margin: 0; width: 2551px; height: 1361px; overflow: hidden; display: flex; flex-direction: column; background: #fff; color: #1b1b1b; font: 12px/20px "Noto Sans", "Open Sans", sans-serif; letter-spacing: -.35px; }
svg { display: block; flex: none; }
.defs { position: absolute; }
symbol path, symbol circle, symbol ellipse { vector-effect: non-scaling-stroke; }

.top { height: 52px; background: linear-gradient(90deg, #006487, #006a8f 30%, #0478a3 90%, #057aa6); color: #fff; }
.titlebar, .menubar { display: flex; justify-content: space-between; }
.titlebar { height: 24px; }
.quick { display: flex; width: 480px; }
.nx { width: 38px; padding-left: 1px; font: 800 21.500px/23px "Open Sans", sans-serif; letter-spacing: 0; }
.svg-label { font-size: 12px; fill: #fff; stroke: none; letter-spacing: -.1px; }
.app-title { width: 300px; margin-left: 804px; margin-right: auto; text-align: center; font-size: 12px; line-height: 22px; letter-spacing: -.3px; color: #dcebf2; }
.window-tools { display: flex; }
.brand { width: 84px; font: 800 12px/25px "Open Sans", sans-serif; letter-spacing: 1px; }
.menubar { height: 28px; }
nav { display: grid; grid-template-columns: 62px 67px 65px 75px 97px 77px 60px 74px 84px 63px 97px; font-size: 13px; line-height: 28px; text-align: center; }
nav a { height: 26px; }
nav a.on { color: #fdc84b; border-bottom: 2px solid #fdc84b; }
nav a:first-child { padding-right: 7px; }
.find { display: flex; align-items: flex-start; }
.search { margin-top: 4px; width: 160px; height: 20px; border: 1px solid #777; background: #fff; color: #aaa; font-size: 11.500px; line-height: 18px; padding-left: 2px; display: flex; justify-content: space-between; letter-spacing: -.2px; }

.ribbon { height: 89px; display: flex; border-bottom: 1px solid #d8d8d8; font-size: 11.500px; line-height: 13px; letter-spacing: -.12px; padding-top: 5px; }
.group { height: 79px; border-right: 1px solid #d8d8d8; display: flex; flex-direction: column; }
.g1 { width: 102px; padding-left: 7px; }
.g2 { width: 535px; padding-left: 7px; }
.g3 { width: 247px; padding-left: 9px; }
.tools { display: grid; height: 65px; align-items: start; padding-top: 2px; }
.g1 .tools { grid-template-columns: 44px 44px; }
.g2 .tools { grid-template-columns: 48px 48px 38px 48px 43px 47px 50px 42px 45px 1fr; }
.g3 .tools { grid-template-columns: 38px 43px 53px 1fr; }
.tool { display: flex; flex-direction: column; align-items: center; text-align: center; white-space: nowrap; }
.g2 .tool:nth-child(9) { padding-right: 7px; }
.g3 .tool:nth-child(3) { padding-right: 7px; }
.tool svg { width: 32px; height: 32px; margin-bottom: 5px; }
.stack > div { display: flex; align-items: center; height: 34px; padding-bottom: 9px; white-space: nowrap; letter-spacing: -.27px; }
.stack svg { width: 24px; height: 24px; margin-right: 4px; }
.ribbon footer { position: relative; text-align: center; color: #006487; line-height: 21px; white-space: nowrap; padding-right: 22px; letter-spacing: -.2px; }
.g1 footer { text-align: left; padding-left: 2px; }
.caret { display: inline-block; border: 3px solid transparent; border-top: 3px solid #111; border-bottom: 0; margin-left: 3px; vertical-align: 3px; }
footer .caret { position: absolute; right: 8px; top: 7px; }
.ribbon-end { margin-left: auto; padding-top: 64px; width: 5px; }
.ribbon-end .caret { margin-left: 0; }

.work { flex: 1; display: flex; min-height: 0; }
.rail { width: 35px; background: #dcdcdc; border-right: 1px solid #aaa; }
.slot { width: 34px; height: 44.200px; display: grid; place-items: center; }
.slot.gear { height: 30px; }
.slot.on { margin-left: 1px; background: #fff; border: 1px solid #bbb; border-right: 0; }
.navigator { width: 298px; border-right: 1px solid #aaa; padding: 0 8px; display: flex; flex-direction: column; }
.nav-title { height: 26px; display: flex; align-items: center; gap: 3px; margin-left: -2px; padding-bottom: 1px; letter-spacing: -.4px; }
.maximize { width: 12px; height: 11px; border: 1px solid #111; border-top-width: 2px; margin-left: auto; margin-right: 3px; }
.tree { border: 1px solid #d0d0d0; height: 1093px; flex: none; display: flex; flex-direction: column; }
.row { display: grid; grid-template-columns: 200px 24px 24px 1fr; grid-auto-flow: dense; height: 20px; line-height: 18px; white-space: nowrap; }
.row > * { grid-row: 1; }
.head { flex: none; height: 19px; line-height: 21px; background: #efefef; border-bottom: 1px solid #d6d6d6; }
.head div { padding-left: 6px; border-right: 1px solid #d0d0d0; overflow: hidden; height: 18px; }
.head div:last-child { border: 0; }
.sort { display: inline-block; border: 5px solid transparent; border-bottom: 5px solid #111; border-top: 0; margin-left: 17px; vertical-align: 1px; }
.body { flex: 1; background:
  linear-gradient(#e6e6e6, #e6e6e6) 199px 0 / 1px 100% no-repeat,
  linear-gradient(#e6e6e6, #e6e6e6) 223px 0 / 1px 100% no-repeat,
  linear-gradient(#e6e6e6, #e6e6e6) 247px 0 / 1px 100% no-repeat,
  repeating-linear-gradient(#fff 0 19px, #e6e6e6 19px 20px, #fafafa 20px 39px, #e6e6e6 39px 40px); }
.body svg { width: 16px; height: 16px; }
.lvl, .leaf { display: flex; align-items: center; height: 20px; padding-top: 2px; position: relative; grid-column: 1; }
.lvl { padding-left: 19px; }
.lvl svg:last-of-type { margin-right: 3px; }
.leaf { padding-left: 38px; }
.leaf svg + svg { margin-right: 3px; }
.lvl::before { content: ""; position: absolute; left: 9px; top: 0; width: 9px; height: 10px; border-left: 1px dotted #999; border-bottom: 1px dotted #999; }
.lvl.first::before { top: 9px; height: 11px; border-bottom: 0; border-top: 1px dotted #999; }
.plus::after, .minus::after { content: "+"; position: absolute; left: 5px; top: 6px; width: 9px; height: 9px; border: 1px solid #ccc; background: #fff; font: 11px/6px "DejaVu Sans", sans-serif; letter-spacing: 0; text-indent: -1px; color: #111; }
.minus::after { content: "\2212"; }
.leaf::before { content: ""; position: absolute; left: 28px; top: 0; width: 9px; height: 20px; border-left: 1px dotted #999; background: repeating-linear-gradient(90deg, #999 0 1px, transparent 1px 2px) 0 10px / 100% 1px no-repeat; }
.leaf.last::before { height: 11px; }
.dim { color: #9f9f9f; }
.bold { font-weight: 700; letter-spacing: -.45px; }
.ok { grid-column: 3; margin: 3px 0 0 4px; }
.mark { grid-column: 2; margin: 3px 0 0 4px; }
.hscroll { height: 16px; background: #efefef; padding: 8px 0 0 17px; }
.hscroll i { display: block; width: 194px; height: 2px; background: #868686; }
.splitter { height: 6px; margin-top: 2px; background: #dcdcdc; border: 1px solid #aaa; flex: none; }
.panel { flex: none; height: 23px; border-bottom: 2px solid #d0d0d0; color: #00638c; font-size: 13px; line-height: 26px; padding-left: 24px; position: relative; letter-spacing: -.4px; }
.splitter + .panel { height: 25px; line-height: 30px; }
.panel::before { content: ""; display: block; float: left; margin: 7px 9px 0 -15px; border: 5px solid transparent; border-left-color: #00638c; border-right: 0; }
.splitter + .panel::before { margin-top: 9px; }

.document { flex: 1; display: flex; flex-direction: column; }
.tabs { height: 26px; border-bottom: 2px solid #005f87; display: flex; }
.tab { display: flex; align-items: center; width: 137px; padding-left: 6px; gap: 3px; white-space: nowrap; }
.tab.active { width: 124px; background: #005f87; color: #fff; padding-left: 7px; gap: 4px; }
.viewport { flex: 1; display: grid; }
.watermark { grid-area: 1 / 1; margin: 0; padding: 3px 0 0 7px; font: 16.700px/20px "Liberation Sans", Arial, sans-serif; letter-spacing: 0; color: #f4433a; white-space: nowrap; }
.scene { grid-area: 1 / 1; }
.line { stroke: #2b2b2b; stroke-width: 1; vector-effect: non-scaling-stroke; }
.line:not([fill]) { fill: none; }
.line.seam { stroke: #555; }
.edge { stroke: #222; stroke-width: .9; }
.edge:not([fill]) { fill: none; }
.axis { font: 12px "Liberation Sans", sans-serif; letter-spacing: 0; }
```
